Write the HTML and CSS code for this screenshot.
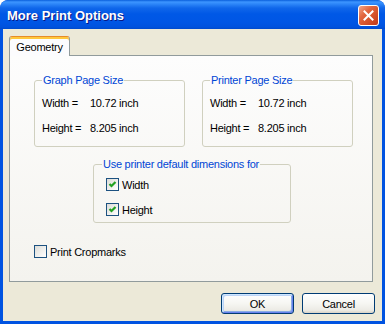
FILE: index.html
```html
<!DOCTYPE html>
<html>
<head>
<meta charset="utf-8">
<title>More Print Options</title>
<link rel="stylesheet" href="styles.css">
</head>
<body>
<div class="window">
  <div class="titlebar">
    <span class="title">More Print Options</span>
    <button class="close" aria-label="Close">
      <svg width="11" height="11" viewBox="0 0 11 11"><path d="M1.5 1.5 L9.5 9.5 M9.5 1.5 L1.5 9.5" stroke="#fff" stroke-width="2" stroke-linecap="square"/></svg>
    </button>
  </div>
  <div class="client">
    <div class="tabs"><div class="tab">Geometry</div></div>
    <div class="page">
      <div class="sizes">
        <fieldset class="group size-group">
          <legend>Graph Page Size</legend>
          <div class="row"><span class="lbl">Width =</span><span>10.72 inch</span></div>
          <div class="row"><span class="lbl">Height =</span><span>8.205 inch</span></div>
        </fieldset>
        <fieldset class="group size-group">
          <legend>Printer Page Size</legend>
          <div class="row"><span class="lbl">Width =</span><span>10.72 inch</span></div>
          <div class="row"><span class="lbl">Height =</span><span>8.205 inch</span></div>
        </fieldset>
      </div>
      <fieldset class="group default-group">
        <legend>Use printer default dimensions for</legend>
        <label class="check"><span class="box"><svg width="11" height="11" viewBox="0 0 11 11"><path d="M2.5 5 L4.5 7 L8.5 3" fill="none" stroke="#21A121" stroke-width="2.2"/></svg></span>Width</label>
        <label class="check"><span class="box"><svg width="11" height="11" viewBox="0 0 11 11"><path d="M2.5 5 L4.5 7 L8.5 3" fill="none" stroke="#21A121" stroke-width="2.2"/></svg></span>Height</label>
      </fieldset>
      <label class="check crop"><span class="box"></span>Print Cropmarks</label>
    </div>
    <div class="buttons">
      <button class="btn default">OK</button>
      <button class="btn">Cancel</button>
    </div>
  </div>
</div>
</body>
</html>
```

FILE: styles.css
```css
html, body {
  margin: 0;
  padding: 0;
  background: #ffffff;
}
body {
  font-family: "Liberation Sans", Arial, sans-serif;
  font-size: 11px;
  letter-spacing: -0.25px;
  color: #000;
}
.window {
  width: 385px;
  height: 324px;
  box-sizing: border-box;
  background: #0053E1;
  border-radius: 8px 8px 0 0;
  padding: 0 3px 3px 3px;
  display: flex;
  flex-direction: column;
  overflow: hidden;
}
.titlebar {
  height: 29px;
  box-sizing: border-box;
  margin: 0 -3px;
  padding: 2px 6px 0 7px;
  display: flex;
  align-items: center;
  justify-content: space-between;
  border-radius: 8px 8px 0 0;
  background: linear-gradient(to bottom, #0A5FDC 0, #3D95FF 2px, #2D86F8 4px, #1067EA 8px, #0058E6 14px, #0056E5 22px, #0052DE 27px, #0049CC 29px);
}
.title {
  color: #fff;
  font-weight: bold;
  font-size: 13px;
  letter-spacing: 0;
  text-shadow: 1px 1px #0A1883;
}
.close {
  width: 21px;
  height: 21px;
  box-sizing: border-box;
  padding: 0;
  border: 1px solid #fff;
  border-radius: 3px;
  background: linear-gradient(135deg, #F2A68A 0%, #E2663F 35%, #D4512A 65%, #C0381A 100%);
  display: flex;
  align-items: center;
  justify-content: center;
}
.close svg { display: block; }
.client {
  flex: 1;
  background: #ECE9D8;
  padding: 7px 7px 0 6px;
  display: flex;
  flex-direction: column;
}
.tabs {
  display: flex;
  position: relative;
  z-index: 1;
}
.tab {
  width: 61px;
  height: 20px;
  box-sizing: border-box;
  margin-bottom: -1px;
  border: 1px solid #919B9C;
  border-top: 1px solid #E68B2C;
  border-bottom: none;
  border-radius: 3px 3px 0 0;
  background: #FCFCFE;
  box-shadow: inset 0 2px #FFC83C;
  text-align: center;
  line-height: 19px;
  padding-top: 1px;
}
.page {
  width: 364px;
  height: 227px;
  box-sizing: border-box;
  border: 1px solid #919B9C;
  background: linear-gradient(to bottom, #FDFDFD, #F4F3EE);
  padding: 18px 0 0 24px;
}
.sizes {
  display: flex;
  gap: 17px;
}
.group {
  margin: 0;
  min-width: 0;
  border: 1px solid #D0D0BF;
  border-radius: 3px;
}
.group legend {
  padding: 0 1px;
  line-height: 13px;
  color: #0046D5;
}
.size-group {
  width: 151px;
  box-sizing: border-box;
  padding: 3px 0 6px 7px;
}
.row {
  height: 25px;
  display: flex;
  align-items: center;
}
.lbl {
  width: 48px;
}
.default-group {
  width: 198px;
  box-sizing: border-box;
  margin: 11px 0 0 59px;
  padding: 1px 0 0 8px;
}
.check {
  display: flex;
  align-items: center;
  height: 25px;
  margin-left: 4px;
  gap: 3px;
}
.box {
  width: 13px;
  height: 13px;
  box-sizing: border-box;
  border: 1px solid #1C5180;
  background: linear-gradient(135deg, #DCDCD7, #FFFFFF);
  display: flex;
  align-items: center;
  justify-content: center;
}
.box svg { display: block; }
.crop {
  margin: 22px 0 0 0;
  height: 13px;
}
.buttons {
  display: flex;
  justify-content: flex-end;
  gap: 8px;
  margin-top: 11px;
}
.btn {
  width: 73px;
  height: 21px;
  box-sizing: border-box;
  padding: 0;
  border: 1px solid #003C74;
  border-radius: 3px;
  background: linear-gradient(to bottom, #FFFFFF 0%, #F6F6F2 50%, #ECEBE5 85%, #D8D2C6 100%);
  font-family: "Liberation Sans", Arial, sans-serif;
  font-size: 11px;
  letter-spacing: -0.25px;
  color: #000;
}
.btn.default {
  box-shadow: inset 1px 1px #CEE7FF, inset -1px -1px #6982EE, inset 2px 2px #BCD4F6, inset -2px -2px #89ADE4;
}
```
